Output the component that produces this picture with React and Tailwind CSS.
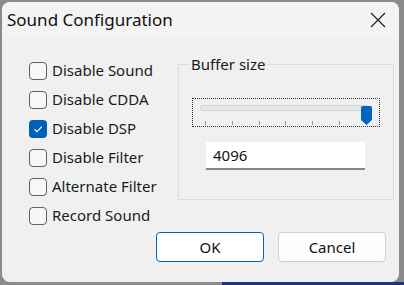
import React from "react";

const font = { fontFamily: '"Noto Sans", "Open Sans", sans-serif' };

function Check({ checked, label }) {
  return (
    <div className="flex h-[29px] items-center">
      {checked ? (
        <div className="flex h-[18px] w-[18px] items-center justify-center rounded-[4px] bg-[#005fb8]">
          <svg width="12" height="10" viewBox="0 0 12 10">
            <path d="M2.5 5.2 L5 7.6 L9.8 2.6" fill="none" stroke="#ffffff" strokeWidth="1.2" />
          </svg>
        </div>
      ) : (
        <div className="h-[18px] w-[18px] rounded-[4px] border border-[#5f5f5f] bg-[#f7f7f7]" />
      )}
      <span className="ml-[5px] text-[15px] leading-none text-[#1a1a1a]">{label}</span>
    </div>
  );
}

export default function App() {
  return (
    <div className="relative h-[285px] w-[404px] overflow-hidden bg-[#8b8b8b]" style={font}>
      <div className="absolute bottom-0 left-[222px] h-[3px] w-[182px] bg-[#27307e]" />
      <div className="relative ml-[2px] mt-[2px] flex h-[280px] w-[397px] flex-col overflow-hidden rounded-[8px] bg-[#f0f0f0]">
        <div className="flex h-[36px] items-center justify-between bg-[#f3f3f3] pl-[5px] pr-[13px]">
          <span className="text-[17px] text-[#111]">Sound Configuration</span>
          <svg width="16" height="16" viewBox="0 0 16 16">
            <path d="M1 1 L15 15 M15 1 L1 15" stroke="#1a1a1a" strokeWidth="1.1" />
          </svg>
        </div>
        <div className="flex">
          <div className="ml-[27px] mt-[18px] flex w-[149px] flex-col">
            <Check label="Disable Sound" />
            <Check label="Disable CDDA" />
            <Check checked label="Disable DSP" />
            <Check label="Disable Filter" />
            <Check label="Alternate Filter" />
            <Check label="Record Sound" />
          </div>
          <div className="relative mt-[26px] h-[136px] w-[216px] border border-[#dcdcdc]">
            <span className="absolute left-[10px] top-[-11px] bg-[#f0f0f0] px-[2px] text-[15px] leading-[20px] text-[#1a1a1a]">
              Buffer size
            </span>
            <div className="ml-[13px] mt-[33px] h-[29px] w-[188px] border border-dotted border-[#303030]">
              <div className="relative">
                <div className="ml-[7px] mt-[6px] h-[6px] w-[168px] rounded-[2px] border border-[#d4d4d4] bg-[#e7e7e7]" />
                <div className="ml-[12px] mt-[10px] flex w-[162px] justify-between">
                  {[0, 1, 2, 3, 4, 5, 6].map((i) => (
                    <div key={i} className="h-[4px] w-[1px] bg-[#9a9a9a]" />
                  ))}
                </div>
                <svg className="absolute left-[168px] top-[1px]" width="11" height="19" viewBox="0 0 11 19">
                  <path d="M1.5 0 H9.5 Q11 0 11 1.5 V14 L5.5 19 L0 14 V1.5 Q0 0 1.5 0 Z" fill="#0067c0" />
                </svg>
              </div>
            </div>
            <div className="ml-[27px] mt-[15px] flex h-[28px] w-[159px] items-center border-b-2 border-[#868686] bg-white pl-[7px] text-[15px] text-[#111]">
              4096
            </div>
          </div>
        </div>
        <div className="mt-[2px] flex justify-end gap-[14px] pr-[13px]">
          <button className="flex h-[30px] w-[108px] items-center justify-center rounded-[4px] border border-[#0067c0] bg-white text-[15px] text-[#111]">
            OK
          </button>
          <button className="flex h-[30px] w-[108px] items-center justify-center rounded-[4px] border border-[#d0d0d0] bg-[#fdfdfd] text-[15px] text-[#111]">
            Cancel
          </button>
        </div>
      </div>
    </div>
  );
}
